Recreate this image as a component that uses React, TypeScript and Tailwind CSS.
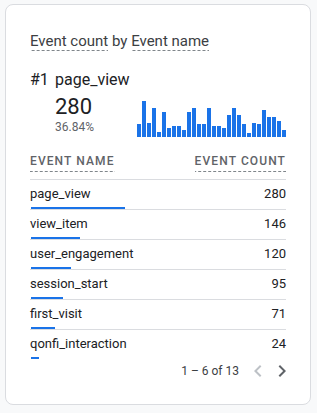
import React from "react";

const bars = [13, 36, 14, 29, 5, 25, 9, 11, 11, 7, 25, 29, 13, 13, 29, 11, 11, 9, 22, 29, 22, 13, 4, 14, 13, 27, 20, 20, 16, 7];

const rows: [string, number][] = [
  ["page_view", 280],
  ["view_item", 146],
  ["user_engagement", 120],
  ["session_start", 95],
  ["first_visit", 71],
  ["qonfi_interaction", 24],
];

const TOTAL = 760;

const dash =
  "bg-[linear-gradient(to_right,#80868b_3px,transparent_3px)] bg-[length:5px_1px] bg-bottom bg-repeat-x";

export default function App() {
  return (
    <div
      className="min-h-[413px] w-[317px] bg-[#f8f9fa] pt-[4px] pl-[5px]"
      style={{ fontFamily: "Roboto, 'Liberation Sans', sans-serif" }}
    >
      <div className="w-[306px] h-[401px] bg-white border border-[#dadce0] rounded-[8px] px-[24px] pt-[27px]">
        <div className="text-[15px] leading-[18px] text-[#3c4043]">
          <span className={`inline-block pb-[1px] ${dash}`}>Event count</span>
          <span> by </span>
          <span className={`inline-block pb-[1px] ${dash}`}>Event name</span>
        </div>

        <div className="mt-[18px] flex text-[16px] leading-[22px] text-[#202124]">
          <span className="w-[25px]">#1</span>
          <span>page_view</span>
        </div>

        <div className="mt-[4px] flex items-start">
          <div className="w-[107px] pl-[25px]">
            <div className="text-[22px] leading-[24px] text-[#202124]">280</div>
            <div className="text-[12px] leading-[16px] text-[#5f6368]">36.84%</div>
          </div>
          <div className="mt-[6px] flex h-[36px] items-end gap-[1px]">
            {bars.map((h, i) => (
              <div key={i} className="w-[4px] bg-[#1a73e8]" style={{ height: h }} />
            ))}
          </div>
        </div>

        <div className="mt-[16px] flex justify-between border-b border-[#dadce0] pb-[7px] text-[12px] font-medium leading-[16px] tracking-[1.1px] text-[#5f6368]">
          <span className={`inline-block pb-[3px] ${dash}`}>EVENT NAME</span>
          <span className={`inline-block pb-[3px] ${dash}`}>EVENT COUNT</span>
        </div>

        {rows.map(([name, v], i) => (
          <div
            key={name}
            className={`flex flex-col pt-[4px] ${i < rows.length - 1 ? "border-b border-[#dadce0]" : ""}`}
          >
            <div className="flex justify-between text-[13px] leading-[20px] text-[#202124]">
              <span>{name}</span>
              <span>{v}</span>
            </div>
            <div className="mt-[3px] h-[2px] pl-[1px]">
              <div className="h-[2px] bg-[#1a73e8]" style={{ width: (v / TOTAL) * 256 }} />
            </div>
          </div>
        ))}

        <div className="-mr-[8px] flex h-[24px] items-center justify-end">
          <span className="mr-[7px] text-[12px] leading-[16px] text-[#3c4043]">1 – 6 of 13</span>
          <svg width="24" height="24" viewBox="0 0 24 24" fill="#bdc1c6">
            <path d="M15.41 7.41L14 6l-6 6 6 6 1.41-1.41L10.83 12z" />
          </svg>
          <svg width="24" height="24" viewBox="0 0 24 24" fill="#5f6368">
            <path d="M10 6L8.59 7.41 13.17 12l-4.58 4.59L10 18l6-6z" />
          </svg>
        </div>
      </div>
    </div>
  );
}
